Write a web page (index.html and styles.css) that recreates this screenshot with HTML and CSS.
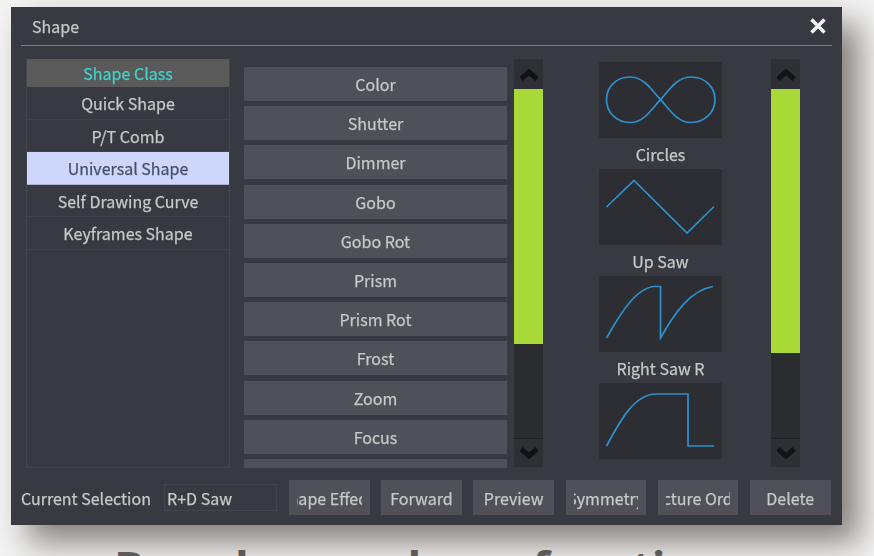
FILE: index.html
```html
<!DOCTYPE html>
<html lang="en">
<head>
<meta charset="utf-8">
<title>Shape</title>
<link rel="stylesheet" href="styles.css">
</head>
<body>
<div class="dialog">
  <header class="title-bar">
    <span class="title">Shape</span>
    <svg class="close" viewBox="0 0 18 18" width="18" height="18"><path d="M2.5 2.5 15.5 15.5M15.5 2.5 2.5 15.5"/></svg>
  </header>
  <main class="main">
    <nav class="classes">
      <div class="class-head">Shape Class</div>
      <div class="class-row">Quick Shape</div>
      <div class="class-row">P/T Comb</div>
      <div class="class-row selected">Universal Shape</div>
      <div class="class-row">Self Drawing Curve</div>
      <div class="class-row">Keyframes Shape</div>
    </nav>
    <div class="attrs">
      <div class="attr">Color</div>
      <div class="attr">Shutter</div>
      <div class="attr">Dimmer</div>
      <div class="attr">Gobo</div>
      <div class="attr">Gobo Rot</div>
      <div class="attr">Prism</div>
      <div class="attr">Prism Rot</div>
      <div class="attr">Frost</div>
      <div class="attr">Zoom</div>
      <div class="attr">Focus</div>
      <div class="attr"></div>
    </div>
    <div class="scroll">
      <div class="scroll-btn up"><svg viewBox="0 0 20 12" width="20" height="12"><path d="M2 10 10 3 18 10"/></svg></div>
      <div class="thumb thumb-a"></div>
      <div class="scroll-btn down"><svg viewBox="0 0 20 12" width="20" height="12"><path d="M2 2 10 9 18 2"/></svg></div>
    </div>
    <div class="shapes">
      <div class="shape"><svg viewBox="0 0 123 75" width="123" height="75"><path d="M61.5 37.7C54 30 46 15 31 15 17 15 7.5 25 7.5 37.7 7.5 50 17 60.5 31 60.5 46 60.5 54 45 61.5 37.7 69 30 77 15 92 15 106 15 116 25 116 37.7 116 50 106 60.5 92 60.5 77 60.5 69 45 61.5 37.7Z"/></svg></div>
      <div class="shape-name">Circles</div>
      <div class="shape"><svg viewBox="0 0 123 75" width="123" height="75"><path d="M7.5 38 35 11.5 88 64 115 37.5"/></svg></div>
      <div class="shape-name">Up Saw</div>
      <div class="shape"><svg viewBox="0 0 123 75" width="123" height="75"><path d="M7.5 62C22 36 38 11 56 10.5H61.5V62C76 36 92 14 114 10.5"/></svg></div>
      <div class="shape-name">Right Saw R</div>
      <div class="shape"><svg viewBox="0 0 123 75" width="123" height="75"><path d="M7.5 63C22 36 36 11 57 11H89V63H115"/></svg></div>
    </div>
    <div class="scroll scroll-b">
      <div class="scroll-btn up"><svg viewBox="0 0 20 12" width="20" height="12"><path d="M2 10 10 3 18 10"/></svg></div>
      <div class="thumb thumb-b"></div>
      <div class="scroll-btn down"><svg viewBox="0 0 20 12" width="20" height="12"><path d="M2 2 10 9 18 2"/></svg></div>
    </div>
  </main>
  <footer class="footer">
    <span class="current-label">Current Selection</span>
    <div class="current-value">R+D Saw</div>
    <div class="actions">
      <div class="action"><span class="clip"><span>Shape Effects</span></span></div>
      <div class="action"><span class="clip"><span>Forward</span></span></div>
      <div class="action"><span class="clip"><span>Preview</span></span></div>
      <div class="action"><span class="clip"><span>Symmetry</span></span></div>
      <div class="action"><span class="clip"><span>Picture Order</span></span></div>
      <div class="action"><span class="clip"><span>Delete</span></span></div>
    </div>
  </footer>
</div>
<p class="caption"><span class="caption-lead">Based on a </span>large function</p>
</body>
</html>
```

FILE: styles.css
```css
* { box-sizing: border-box; }
html, body { margin: 0; }
body {
  height: 556px;
  padding: 7px 32px 0 11px;
  overflow: hidden;
  background: #f3f3f3;
  font-family: "Noto Sans CJK SC", "Noto Sans", sans-serif;
  font-size: 16px;
  color: #c8c8c8;
}
.dialog {
  width: 831px;
  height: 518px;
  background: #373a41;
  box-shadow: 17px 17px 30px rgba(30, 20, 10, 0.52);
  filter: blur(0.35px);
  -webkit-text-stroke: 0.25px currentColor;
}
.title-bar {
  height: 39px;
  margin: 0 10px;
  padding: 0 5px 0 11px;
  display: flex;
  align-items: center;
  justify-content: space-between;
  border-bottom: 1px solid #6e9433;
}
.title { line-height: 1; }
.close path { fill: none; stroke: #f2f2f2; stroke-width: 3.6; }
.main {
  height: 409px;
  margin-top: 13px;
  padding-left: 15px;
  display: flex;
  align-items: stretch;
}
.classes {
  width: 204px;
  border: 1px solid #43464e;
  border-top: 0;
}
.class-head {
  height: 28px;
  background: #5a5a5a;
  color: #3fd2ca;
  text-align: center;
  line-height: 28px;
}
.class-row {
  height: 32.6px;
  text-align: center;
  line-height: 33px;
  border-bottom: 1px solid #3f4249;
}
.class-row.selected {
  background: #ced6fb;
  color: #4a4f68;
  border-bottom-color: #a9b0d0;
}
.attrs {
  width: 263px;
  margin-left: 14px;
  padding-top: 8px;
  overflow: hidden;
  display: flex;
  flex-direction: column;
  gap: 5.2px;
}
.attr {
  flex: none;
  height: 34px;
  background: #4f5058;
  text-align: center;
  line-height: 35px;
}
.scroll {
  width: 29px;
  margin-left: 7px;
  height: 408px;
  background: #2b2c30;
  display: flex;
  flex-direction: column;
}
.scroll-b { margin-left: 49px; }
.scroll-btn {
  flex: none;
  height: 29px;
  display: flex;
  align-items: center;
  justify-content: center;
  background: #2f3035;
}
.scroll-btn path { fill: none; stroke: #111215; stroke-width: 5; }
.scroll-btn.up { height: 30px; padding-top: 2px; }
.scroll-btn.down {
  margin-top: auto;
  border-top: 1px solid #1f2023;
}
.thumb { flex: none; background: #a9da38; }
.thumb-a { height: 255px; }
.thumb-b { height: 264px; }
.shapes {
  width: 123px;
  margin-left: 56px;
  padding-top: 3px;
}
.shape {
  height: 76px;
  background: #2d2e33;
  border-radius: 1px;
}
.shape svg { display: block; }
.shape path { fill: none; stroke: #2e90cc; stroke-width: 1.7; }
.shape-name {
  height: 31px;
  text-align: center;
  line-height: 32px;
}
.footer {
  height: 35px;
  margin-top: 12px;
  padding: 0 10px;
  display: flex;
  align-items: center;
}
.current-label { width: 143px; flex: none; white-space: nowrap; }
.current-value {
  width: 113px;
  height: 27px;
  flex: none;
  padding-left: 2px;
  border: 1px solid #42454d;
  line-height: 26px;
}
.actions {
  margin-left: 12px;
  display: flex;
  gap: 11.6px;
}
.action {
  width: 80.6px;
  height: 35px;
  padding: 0 8px;
  background: #4f5058;
  line-height: 37px;
}
.clip {
  display: flex;
  justify-content: center;
  overflow: hidden;
  white-space: nowrap;
}
.clip span { flex: none; }
.caption {
  height: 19px;
  margin: 12px 0 0 103px;
  overflow: hidden;
  font-family: "Open Sans", sans-serif;
  font-weight: 700;
  font-size: 45px;
  line-height: 60px;
  color: #666;
  white-space: nowrap;
}
.caption-lead { word-spacing: 13px; }
```
